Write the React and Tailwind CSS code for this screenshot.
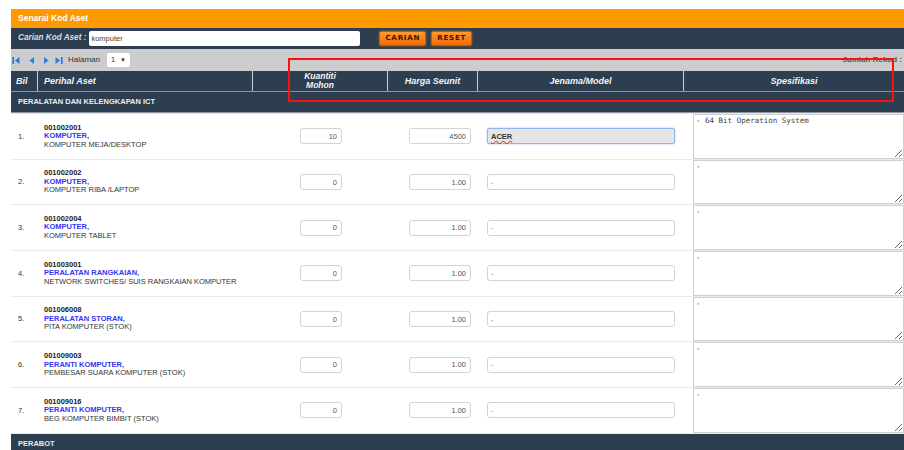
import { useState } from 'react'

const ROWS = [
  { code: '001002001', cat: 'KOMPUTER,', desc: 'KOMPUTER MEJA/DESKTOP', qty: '10', price: '4500', brand: 'ACER', spec: '- 64 Bit Operation System', active: true },
  { code: '001002002', cat: 'KOMPUTER,', desc: 'KOMPUTER RIBA /LAPTOP', qty: '0', price: '1.00', brand: '-', spec: '-' },
  { code: '001002004', cat: 'KOMPUTER,', desc: 'KOMPUTER TABLET', qty: '0', price: '1.00', brand: '-', spec: '-' },
  { code: '001003001', cat: 'PERALATAN RANGKAIAN,', desc: 'NETWORK SWITCHES/ SUIS RANGKAIAN KOMPUTER', qty: '0', price: '1.00', brand: '-', spec: '-' },
  { code: '001006008', cat: 'PERALATAN STORAN,', desc: 'PITA KOMPUTER (STOK)', qty: '0', price: '1.00', brand: '-', spec: '-' },
  { code: '001009003', cat: 'PERANTI KOMPUTER,', desc: 'PEMBESAR SUARA KOMPUTER (STOK)', qty: '0', price: '1.00', brand: '-', spec: '-' },
  { code: '001009016', cat: 'PERANTI KOMPUTER,', desc: 'BEG KOMPUTER BIMBIT (STOK)', qty: '0', price: '1.00', brand: '-', spec: '-' },
]

const sans = { fontFamily: '"Liberation Sans", Arial, sans-serif' }

function PagerIcon({ dir, bar }) {
  // small blue pager arrows: first / prev / next / last
  return (
    <svg width="8" height="9" viewBox="0 0 8 9" className="shrink-0">
      {dir === 'left' ? (
        <>
          {bar && <rect x="0.3" y="1" width="1.8" height="7" fill="#2b7be6" />}
          <path d={bar ? 'M7.5 1 L3 4.5 L7.5 8 Z' : 'M6 1 L1.5 4.5 L6 8 Z'} fill="#2b7be6" />
        </>
      ) : (
        <>
          <path d={bar ? 'M0.5 1 L5 4.5 L0.5 8 Z' : 'M2 1 L6.5 4.5 L2 8 Z'} fill="#2b7be6" />
          {bar && <rect x="5.9" y="1" width="1.8" height="7" fill="#2b7be6" />}
        </>
      )}
    </svg>
  )
}

function OrangeButton({ children }) {
  return (
    <button className="h-[15px] px-[5px] rounded-[2px] border border-[#c85a00] bg-gradient-to-b from-[#ff9a2e] to-[#f06a00] text-[7px] font-bold tracking-[0.12em] text-[#3a1600] leading-none shadow-[0_0_2px_rgba(255,140,0,0.6)]"
      style={{ fontFamily: '"DejaVu Sans", Verdana, sans-serif' }}>
      {children}
    </button>
  )
}

function AssetRow({ row, index }) {
  const [qty, setQty] = useState(row.qty)
  const [price, setPrice] = useState(row.price)
  const [brand, setBrand] = useState(row.brand)
  const [spec, setSpec] = useState(row.spec)

  return (
    <div className="flex h-[45.7px] border-b border-[#ececec] bg-white">
      <div className="w-[29px] flex items-center pl-[7px] text-[7.5px] text-[#333]">{index + 1}.</div>
      <div className="w-[250px] flex flex-col justify-center pl-[4px] text-[7.5px] leading-[8.5px]">
        <span className="font-bold text-[#222]">{row.code}</span>
        <span className="font-bold text-[#3535f2]">{row.cat}</span>
        <span className="text-[#333]">{row.desc}</span>
      </div>
      <div className="w-[110px] flex items-center pl-[10px]">
        <input value={qty} onChange={(e) => setQty(e.target.value)}
          className="w-[42px] h-[16px] border border-[#d4d4d4] rounded-[3px] bg-white text-right pr-[4px] text-[7.5px] text-[#555] outline-none" style={sans} />
      </div>
      <div className="w-[80px] flex items-center pl-[9px]">
        <input value={price} onChange={(e) => setPrice(e.target.value)}
          className="w-[62px] h-[16px] border border-[#d4d4d4] rounded-[3px] bg-white text-right pr-[4px] text-[7.5px] text-[#555] outline-none" style={sans} />
      </div>
      <div className="w-[210px] flex items-center pl-[7px]">
        {row.active ? (
          <div className="w-[188px] h-[16px] border border-[#8fb8ea] rounded-[2px] bg-[#e6e6e6] flex items-center pl-[3px] text-[7.5px] font-bold text-[#333] shadow-[0_0_2px_#9cc3f0]">
            <span className="underline decoration-wavy decoration-[#e02020] underline-offset-[1px]">{brand}</span>
          </div>
        ) : (
          <input value={brand} onChange={(e) => setBrand(e.target.value)}
            className="w-[188px] h-[16px] border border-[#d4d4d4] rounded-[3px] bg-white pl-[3px] text-[7.5px] text-[#888] outline-none" style={sans} />
        )}
      </div>
      <div className="flex-1 pl-[3px]">
        <textarea value={spec} onChange={(e) => setSpec(e.target.value)}
          className="w-[211px] h-full border border-[#cfcfcf] bg-white px-[2px] py-[1px] text-[7.5px] leading-[9px] text-[#444] outline-none block"
          style={{ fontFamily: '"DejaVu Sans Mono", "Liberation Mono", monospace' }} />
      </div>
    </div>
  )
}

function SectionRow({ label }) {
  return (
    <div className="h-[21px] flex items-center pl-[7px] bg-[#2c3e50] border-b border-[#8a96a3] text-[7.5px] font-bold text-[#e9edf1]">
      {label}
    </div>
  )
}

export default function App() {
  const [search, setSearch] = useState('komputer')

  return (
    <div className="w-[904px] h-[450px] overflow-hidden bg-white pt-[9px] pl-[11px]" style={sans}>
      <div className="relative w-[893px]">
        {/* title bar */}
        <div className="h-[19px] bg-[#ff9900] flex items-center pl-[7px] text-[8.5px] font-bold text-white">
          Senarai Kod Aset
        </div>

        {/* search bar */}
        <div className="h-[21px] bg-[#2c3e50] flex items-center pl-[7px] gap-[3px]">
          <span className="italic font-bold text-[8.2px] text-[#d9dde2]">Carian Kod Aset :</span>
          <input value={search} onChange={(e) => setSearch(e.target.value)}
            className="w-[271px] h-[15px] rounded-[2px] bg-white pl-[2px] text-[7.5px] text-[#444] outline-none" style={sans} />
          <div className="flex gap-[5px] ml-[16px]">
            <OrangeButton>CARIAN</OrangeButton>
            <OrangeButton>RESET</OrangeButton>
          </div>
        </div>

        {/* pager */}
        <div className="h-[22px] bg-[#cccccc] flex items-center pl-[1px] pr-[2px]">
          <div className="flex items-center gap-[2px]">
            <PagerIcon dir="left" bar />
            <span className="w-[4px]" />
            <PagerIcon dir="left" />
            <span className="w-[2px]" />
            <PagerIcon dir="right" />
            <span className="w-[1px]" />
            <PagerIcon dir="right" bar />
          </div>
          <span className="ml-[5px] text-[8px] text-[#333]">Halaman</span>
          <div className="ml-[7px] w-[23px] h-[14px] bg-white rounded-[2px] flex items-center justify-between px-[4px] text-[7.5px] text-[#333]">
            <span>1</span>
            <span className="text-[6px]">▼</span>
          </div>
          <span className="ml-auto text-[8px] font-bold text-[#555]">Jumlah Rekod :</span>
        </div>

        {/* header */}
        <div className="h-[21px] flex bg-[#2c3e50] border-b border-[#8a96a3] text-[9px] italic font-bold text-[#f2f4f6] leading-[9px]">
          <div className="w-[27px] flex items-center pl-[5px] border-r border-[#c9d0d7]">Bil</div>
          <div className="w-[215px] flex items-center pl-[6px] border-r border-[#c9d0d7]">Perihal Aset</div>
          <div className="w-[135px] flex flex-col items-center justify-center border-r border-[#c9d0d7] text-[8.5px] leading-[9.5px]">
            <span>Kuantiti</span>
            <span>Mohon</span>
          </div>
          <div className="w-[90px] flex items-center justify-center border-r border-[#c9d0d7]">Harga Seunit</div>
          <div className="w-[206px] flex items-center justify-center border-r border-[#c9d0d7]">Jenama/Model</div>
          <div className="flex-1 flex items-center justify-center">Spesifikasi</div>
        </div>

        <SectionRow label="PERALATAN DAN KELENGKAPAN ICT" />
        <div className="h-[1px] bg-[#e6e6e6]" />

        {ROWS.map((row, i) => (
          <AssetRow key={row.code} row={row} index={i} />
        ))}

        <SectionRow label="PERABOT" />

        {/* highlight box drawn over the header */}
        <div className="absolute left-[277px] top-[49px] w-[606px] h-[44px] border-2 border-[#ff1010] pointer-events-none" />
      </div>
    </div>
  )
}
